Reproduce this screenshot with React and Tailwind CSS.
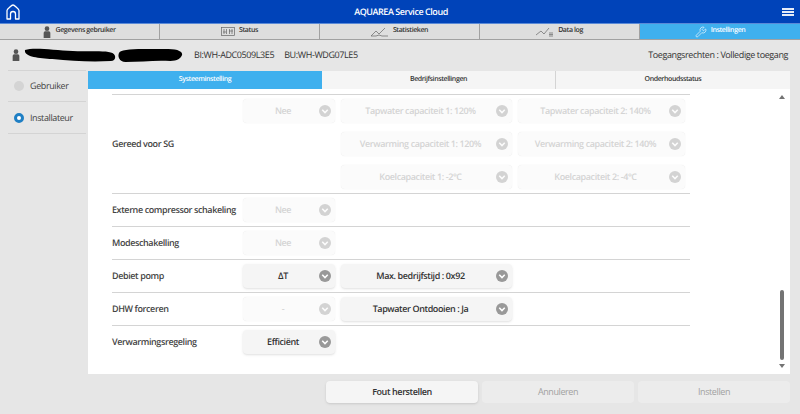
import React from 'react'
import { Wrench } from 'lucide-react'

const rowClass = 'grid grid-cols-[125px_92px_171px_167px] gap-x-1.5 items-center border-b border-neutral-300 text-[#444] whitespace-nowrap'

function Chevron({ disabled }) {
    return (
        <svg viewBox="0 0 14 14" className={disabled ? 'w-3 h-3 opacity-40 shrink-0' : 'w-3 h-3 shrink-0'}>
            <circle cx="7" cy="7" r="7" fill="#999" />
            <path d="M3.8 5.6 7 8.8l3.2-3.2" fill="none" stroke="#fff" strokeWidth="1.8" />
        </svg>
    )
}

function Select({ label, disabled }) {
    return (
        <div className={disabled
            ? 'flex items-center h-6 px-1 rounded-sm bg-[#fbfbfb] text-neutral-300 shadow-[0_0_1px_rgba(0,0,0,0.12)]'
            : 'flex items-center h-6 px-1 rounded-sm bg-[#f5f5f5] text-[#333] shadow-sm'}>
            <span className="flex-1 text-center text-[9px] font-semibold whitespace-nowrap">{label}</span>
            <Chevron disabled={disabled} />
        </div>
    )
}

function Person({ className }) {
    return (
        <svg viewBox="0 0 12 18" className={className} fill="#555">
            <circle cx="6" cy="4" r="3.5" />
            <path d="M1 18V10.5C1 8.8 2.3 8 4 8h4c1.7 0 3 .8 3 2.5V18z" />
        </svg>
    )
}

function Tab({ icon, label, active }) {
    return (
        <div className={active
            ? 'flex items-center justify-center gap-1 bg-[#3fb0ee] text-white'
            : 'flex items-center justify-center gap-1 border-r border-neutral-400 bg-[#dedede] text-[#333]'}>
            {icon}
            <span className="text-[7px] font-semibold">{label}</span>
        </div>
    )
}

export default function App() {
    return (
        <div className="flex flex-col h-[414px] bg-[#e6e6e6] font-['Open_Sans',sans-serif] tracking-tight [text-rendering:geometricPrecision]">
            {/* header */}
            <header className="flex items-center justify-between h-6 px-1.5 bg-[#0043b9] border-b border-[#5a8ad8]">
                <svg viewBox="0 0 14 16" className="w-3.5 h-4" fill="none" stroke="#fff" strokeWidth="1.3">
                    <path d="M1 15V6.5C1 5 6 1 7 1s6 4 6 5.5V15H9.5V10a2.5 2.5 0 0 0-5 0v5z" strokeLinejoin="round" />
                </svg>
                <span className="text-[9px] font-semibold tracking-tighter text-white">AQUAREA Service Cloud</span>
                <div className="flex flex-col gap-px w-3">
                    <div className="h-0.5 bg-white/90" />
                    <div className="h-0.5 bg-white/90" />
                    <div className="h-0.5 bg-white/90" />
                </div>
            </header>

            {/* main tabs */}
            <nav className="grid grid-cols-5 h-4 border-b border-neutral-400">
                <Tab label="Gegevens gebruiker" icon={<Person className="w-2 h-3" />} />
                <Tab label="Status" icon={
                    <svg viewBox="0 0 14 10" className="w-3.5 h-2.5" fill="none" stroke="#666" strokeWidth="0.7">
                        <rect x="0.5" y="0.5" width="13" height="8" />
                        <path d="M3 2v5M5.5 2v5M8.5 2v5M11 2v5M2 5h3M8 4h4" />
                    </svg>
                } />
                <Tab label="Statistieken" icon={
                    <svg viewBox="0 0 18 10" className="w-4.5 h-2.5" fill="none" stroke="#666" strokeWidth="0.7">
                        <path d="M0 9l5-5 3 3 6-6M0 9h5l3-1 3 1h6" />
                    </svg>
                } />
                <Tab label="Data log" icon={
                    <svg viewBox="0 0 18 10" className="w-4.5 h-2.5" fill="none" stroke="#666" strokeWidth="0.7">
                        <path d="M0 8l5-4 3 3 5-6" />
                        <path d="M13 6h4M13 7.5h4M13 9h4" />
                    </svg>
                } />
                <Tab active label="Instellingen" icon={<Wrench className="w-3 h-3 text-white" strokeWidth={1.25} />} />
            </nav>

            {/* device row */}
            <div className="flex items-center h-7.5 pl-3 pr-3 text-[#333]">
                <Person className="w-2 h-3 mr-1" />
                <svg viewBox="0 0 164 14" className="w-40 h-3.5 mr-2.5 shrink-0" fill="#000" preserveAspectRatio="none">
                    <path d="M1 2C10-1 30 2 50 3s38-1 42 3c3 3 1 7-3 7-20 1-40 0-60-2C15 10 0 9 1 2z" />
                    <path d="M98 4c4-4 30-3 50-3 10 0 15 3 14 6s-5 6-12 6c-16-1-30 1-46 1-6 0-9-6-6-10z" />
                </svg>
                <span className="text-[9px] mr-2.5">BI:WH-ADC0509L3E5</span>
                <span className="text-[9px]">BU:WH-WDG07LE5</span>
                <span className="ml-auto text-[9px] font-medium">Toegangsrechten : Volledige toegang</span>
            </div>

            <div className="flex flex-1 min-h-0">
                {/* sidebar */}
                <aside className="w-22 shrink-0 pl-2 pr-0.5">
                    <div className="flex items-center gap-1.5 h-8 pl-1.5 border-y border-neutral-300 text-[9px] font-medium text-[#444]">
                        <span className="w-2.5 h-2.5 rounded-full bg-neutral-300" />
                        Gebruiker
                    </div>
                    <div className="flex items-center gap-1.5 h-8 pl-1.5 border-b border-neutral-300 text-[9px] font-medium text-[#444]">
                        <span className="w-2.5 h-2.5 rounded-full bg-white border-[3px] border-[#1f7fc4]" />
                        Installateur
                    </div>
                </aside>

                <main className="flex flex-col flex-1 min-w-0 mr-2.5 pt-px">
                    {/* sub tabs */}
                    <div className="grid grid-cols-3 h-4.5 shrink-0 bg-[#f5f5f5] text-[7px] font-semibold text-[#333]">
                        <div className="flex items-center justify-center bg-[#3fb0ee] text-white">Systeeminstelling</div>
                        <div className="flex items-center justify-center border-r border-neutral-300">Bedrijfsinstellingen</div>
                        <div className="flex items-center justify-center">Onderhoudsstatus</div>
                    </div>

                    <div className="flex flex-1 min-h-0 bg-white text-[9px] font-semibold">
                        <div className="flex-1 pl-6 pt-1.25">
                            <div className="w-[578px] border-t border-neutral-300">
                                <div className={rowClass + ' gap-y-2.25 py-1'}>
                                    <span className="row-start-2">Gereed voor SG</span>
                                    <div className="col-start-2 row-start-1"><Select disabled label="Nee" /></div>
                                    <div className="col-start-3 row-start-1"><Select disabled label="Tapwater capaciteit 1: 120%" /></div>
                                    <div className="col-start-4 row-start-1"><Select disabled label="Tapwater capaciteit 2: 140%" /></div>
                                    <div className="col-start-3 row-start-2"><Select disabled label="Verwarming capaciteit 1: 120%" /></div>
                                    <div className="col-start-4 row-start-2"><Select disabled label="Verwarming capaciteit 2: 140%" /></div>
                                    <div className="col-start-3 row-start-3"><Select disabled label="Koelcapaciteit 1: -2°C" /></div>
                                    <div className="col-start-4 row-start-3"><Select disabled label="Koelcapaciteit 2: -4°C" /></div>
                                </div>
                                <div className={rowClass + ' py-1'}>
                                    <span>Externe compressor schakeling</span>
                                    <Select disabled label="Nee" />
                                </div>
                                <div className={rowClass + ' py-1'}>
                                    <span>Modeschakelling</span>
                                    <Select disabled label="Nee" />
                                </div>
                                <div className={rowClass + ' py-1'}>
                                    <span>Debiet pomp</span>
                                    <Select label="ΔT" />
                                    <Select label="Max. bedrijfstijd : 0x92" />
                                </div>
                                <div className={rowClass + ' py-1'}>
                                    <span>DHW forceren</span>
                                    <Select disabled label="-" />
                                    <Select label="Tapwater Ontdooien : Ja" />
                                </div>
                                <div className={rowClass + ' py-1 border-b-0'}>
                                    <span>Verwarmingsregeling</span>
                                    <Select label="Efficiënt" />
                                </div>
                            </div>
                        </div>

                        {/* scrollbar */}
                        <div className="flex flex-col items-center justify-between w-4 py-1.5">
                            <div className="w-0 h-0 border-x-[3px] border-x-transparent border-b-4 border-b-neutral-500" />
                            <div className="flex flex-col items-center gap-1 mt-auto">
                                <div className="w-1 h-[70px] rounded-full bg-neutral-500" />
                                <div className="w-0 h-0 border-x-[3px] border-x-transparent border-t-4 border-t-neutral-500" />
                            </div>
                        </div>
                    </div>
                </main>
            </div>

            {/* footer */}
            <footer className="flex justify-end gap-1 h-10 pt-1.75 pr-2.5 text-[9px] font-semibold">
                <button className="w-38 h-5.5 rounded-sm bg-[#f5f5f5] text-[#333] shadow-sm">Fout herstellen</button>
                <button className="w-38 h-5.5 rounded-sm bg-[#ececec] text-neutral-400 font-medium">Annuleren</button>
                <button className="w-38 h-5.5 rounded-sm bg-[#ececec] text-neutral-400 font-medium">Instellen</button>
            </footer>
        </div>
    )
}
